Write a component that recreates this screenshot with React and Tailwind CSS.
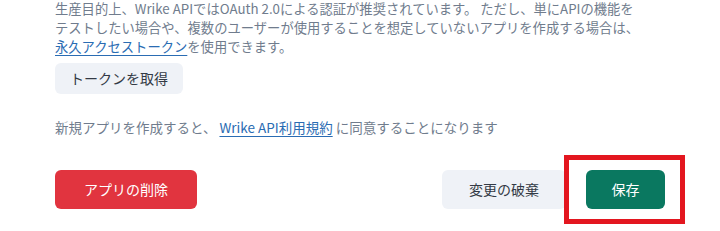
import React from "react";

const font = { fontFamily: '"Noto Sans CJK JP", "Noto Sans", sans-serif' };

export default function App() {
    return (
        <div className="w-[720px] h-[231px] bg-white overflow-hidden" style={font}>
            <div className="px-[55px] mt-[-1px]">
                {/* token description */}
                <p className="text-[13.3px] leading-[19px] text-[#707c8d] whitespace-nowrap">
                    生産目的上、Wrike APIではOAuth 2.0による認証が推奨されています。 ただし、単にAPIの機能を
                    <br />
                    テストしたい場合や、複数のユーザーが使用することを想定していないアプリを作成する場合は、
                    <br />
                    <a href="#" className="text-[#2a6cb3] underline underline-offset-[3px]">永久アクセストークン</a>
                    を使用できます。
                </p>

                <button className="mt-[7px] h-[31px] w-[128px] rounded-md bg-[#eff2f7] text-[14px] text-[#333a45]">
                    トークンを取得
                </button>

                <p className="mt-[24px] text-[13.5px] leading-[19px] text-[#707c8d] whitespace-nowrap">
                    新規アプリを作成すると、
                    <a href="#" className="ml-[3px] text-[#2a6cb3] underline underline-offset-[3px]">Wrike API利用規約</a>
                    {" "}に同意することになります
                </p>

                <div className="mt-[33px] flex items-center justify-between">
                    <button className="h-[39px] w-[142px] rounded-md bg-[#e1343f] text-[14px] text-white">
                        アプリの削除
                    </button>
                    <div className="flex items-center gap-[20px]">
                        <button className="h-[39px] w-[124px] rounded-md bg-[#eff2f7] text-[14px] text-[#333a45]">
                            変更の破棄
                        </button>
                        <div className="relative">
                            <button className="h-[39px] w-[79px] rounded-md bg-[#0a7860] text-[14px] text-white">
                                保存
                            </button>
                            {/* highlight annotation */}
                            <div className="absolute -left-[22px] -right-[20px] -top-[15px] -bottom-[15px] border-[5px] border-[#e3161f] pointer-events-none" />
                        </div>
                    </div>
                </div>
            </div>
        </div>
    );
}
